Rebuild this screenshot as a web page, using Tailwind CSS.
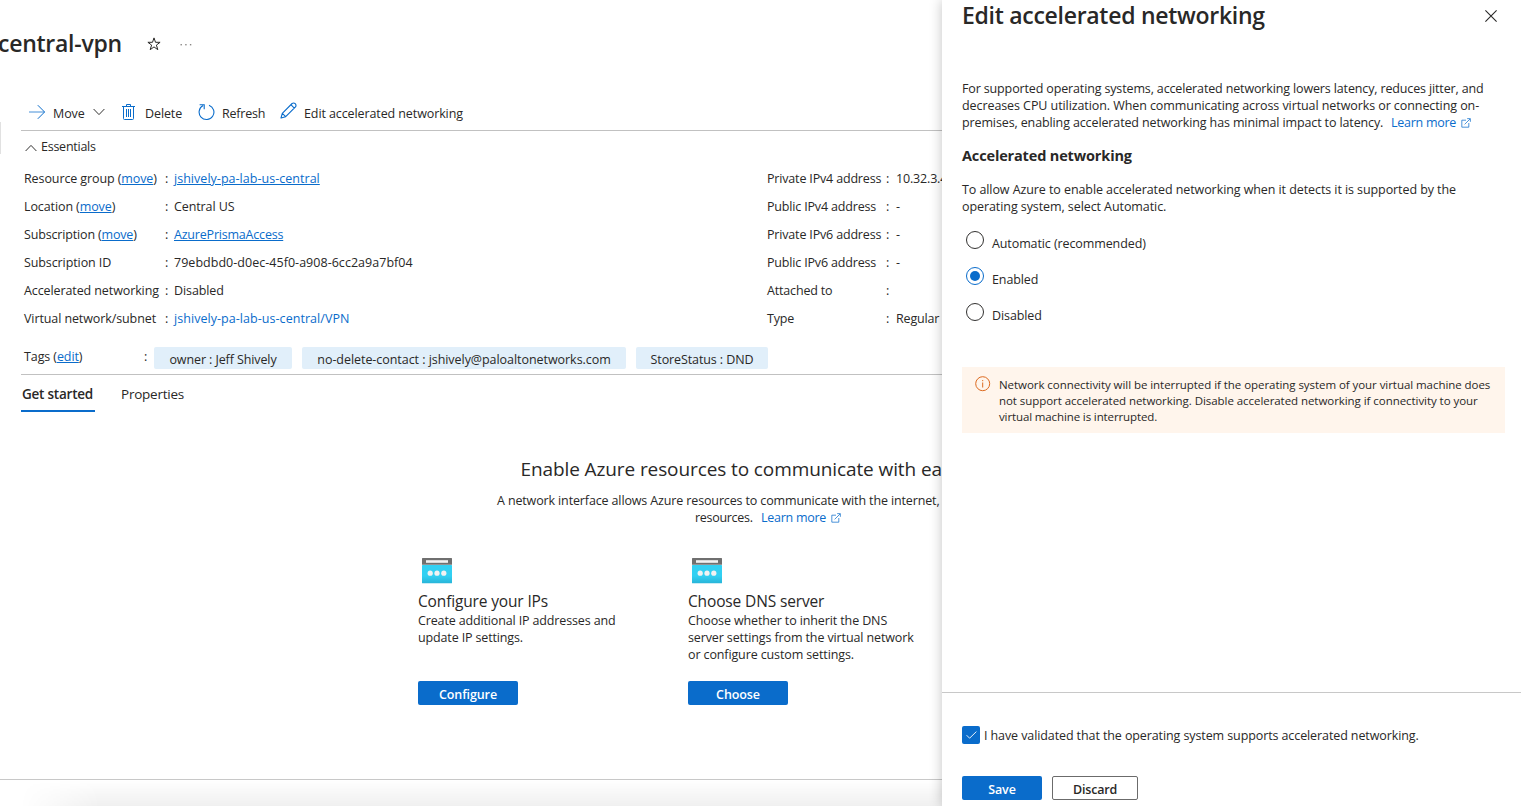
<!DOCTYPE html>
<html lang="en">
<head>
<meta charset="utf-8">
<title>Edit accelerated networking</title>
<script src="https://cdn.jsdelivr.net/npm/@tailwindcss/browser@4"></script>
</head>
<body class="bg-white">
<div class="flex h-[806px] w-[1521px] overflow-hidden bg-white font-['Open_Sans','Noto_Sans',sans-serif] text-[12.5px] leading-[17px] tracking-[-0.1px] whitespace-nowrap text-[#292827]">

  <main class="relative flex h-full w-[942px] shrink-0 flex-col overflow-hidden">
    <!-- Resource title -->
    <header class="flex h-[88px] items-center">
      <h1 class="-mt-[2px] -ml-[2px] w-[149px] text-[23px] leading-8 font-semibold tracking-[-0.26px]">central-vpn</h1>
      <svg class="size-[14px]" viewBox="0 0 14 14" fill="none" stroke="#292827" stroke-width="1"><path d="M7 .9 8.5 5.3H13.1L9.4 8.1 10.8 12.7 7 9.9 3.2 12.7 4.6 8.1.9 5.3H5.5Z"/></svg>
      <svg class="ml-[19px] h-[3px] w-[12px]" viewBox="0 0 12 3" fill="#8a8886"><rect x="0.5" y="1" width="1.4" height="1.4"/><rect x="5.2" y="1" width="1.4" height="1.4"/><rect x="9.9" y="1" width="1.4" height="1.4"/></svg>
    </header>

    <!-- Command bar -->
    <nav class="ml-[21px] flex h-[43px] border-b border-[#c1c1c1] pt-[9px]">
      <div class="flex h-[32px] w-[99px] items-center pl-[7px]">
        <svg class="mt-[-2px] h-[16px] w-[18px]" viewBox="0 0 18 16" fill="none" stroke="#0a6ccb"><path d="M1 8H16.5" stroke-opacity=".75"/><path d="M9.8 1.2 16.6 8 9.8 14.8"/></svg>
        <span class="ml-[7px] w-[32px]">Move</span>
        <svg class="mt-[-3px] ml-[8px] h-[8px] w-[12px]" viewBox="0 0 12 8" fill="none" stroke="#323130"><path d="M.6 1 6 6.6 11.4 1"/></svg>
      </div>
      <div class="flex h-[32px] w-[76px] items-center">
        <svg class="mt-[-2px] ml-[1px] h-[18px] w-[15px]" viewBox="0 0 15 18" fill="none" stroke="#0a6ccb"><path d="M1 3.5H14M5.5 3V1.5H9.5V3M2.5 3.5V15.5Q2.5 16.5 3.5 16.5H11.5Q12.5 16.5 12.5 15.5V3.5"/><path d="M5.5 6V14M7.5 6V14M9.5 6V14"/></svg>
        <span class="ml-[9px]">Delete</span>
      </div>
      <div class="flex h-[32px] w-[84px] items-center">
        <svg class="mt-[-3px] ml-[1.5px] h-[18px] w-[17px]" viewBox="0 0 17 18" fill="none" stroke="#0a6ccb" stroke-width="1.1"><path d="M11 2.2A7.4 7.4 0 1 1 5.1 2.6"/><path d="M1.6 1.7H6.2V6.3"/></svg>
        <span class="ml-[7.5px] tracking-[-0.2px]">Refresh</span>
      </div>
      <div class="flex h-[32px] items-center">
        <svg class="mt-[-5px] h-[17px] w-[17px]" viewBox="0 0 17 17" fill="none" stroke="#0a6ccb" stroke-width="1.1" stroke-linejoin="round"><path d="M1 16 2.3 11.3 12.1 1.5Q13.8.3 15.2 1.7T15.5 4.9L5.7 14.7ZM10.9 2.7 14.3 6.1M2.3 11.3 5.7 14.7"/></svg>
        <span class="ml-[7px]">Edit accelerated networking</span>
      </div>
    </nav>

    <!-- Essentials -->
    <div class="flex h-[32px] items-center pl-[25px]">
      <svg class="mt-[1px] h-[8px] w-[12px]" viewBox="0 0 12 8" fill="none" stroke="#323130"><path d="M.6 7 6 1.4 11.4 7"/></svg>
      <span class="-mt-[1px] ml-[4px] tracking-[-0.25px]">Essentials</span>
    </div>
    <div class="mt-[2px] -mb-px flex pl-6 leading-7">
      <dl class="grid w-[743px] shrink-0 grid-cols-[141px_9px_1fr]">
        <dt>Resource group (<a class="text-[#0a6ccb] underline">move</a>)</dt><dd>:</dd><dd><a class="text-[#0a6ccb] underline tracking-[0.03px]">jshively-pa-lab-us-central</a></dd>
        <dt>Location (<a class="text-[#0a6ccb] underline">move</a>)</dt><dd>:</dd><dd>Central US</dd>
        <dt class="tracking-[-0.16px]">Subscription (<a class="text-[#0a6ccb] underline">move</a>)</dt><dd>:</dd><dd><a class="text-[#0a6ccb] underline tracking-[-0.2px]">AzurePrismaAccess</a></dd>
        <dt>Subscription ID</dt><dd>:</dd><dd class="tracking-[0.03px]">79ebdbd0-d0ec-45f0-a908-6cc2a9a7bf04</dd>
        <dt>Accelerated networking</dt><dd>:</dd><dd>Disabled</dd>
        <dt>Virtual network/subnet</dt><dd>:</dd><dd><a class="text-[#0a6ccb] tracking-[0.05px]">jshively-pa-lab-us-central/VPN</a></dd>
      </dl>
      <dl class="grid w-[260px] shrink-0 grid-cols-[119px_10px_1fr] tracking-[-0.17px]">
        <dt>Private IPv4 address</dt><dd>:</dd><dd>10.32.3.4</dd>
        <dt>Public IPv4 address</dt><dd>:</dd><dd>-</dd>
        <dt>Private IPv6 address</dt><dd>:</dd><dd>-</dd>
        <dt>Public IPv6 address</dt><dd>:</dd><dd>-</dd>
        <dt>Attached to</dt><dd>:</dd><dd></dd>
        <dt>Type</dt><dd>:</dd><dd>Regular</dd>
      </dl>
    </div>

    <!-- Tags -->
    <div class="ml-[21px] flex h-[43px] border-b border-[#c1c1c1] pt-[15px] pl-[3px]">
      <span class="mt-[1px] w-[120px]">Tags (<a class="text-[#0a6ccb] underline">edit</a>)</span>
      <span class="mt-[1px] w-[10px]">:</span>
      <div class="flex gap-[10px]">
        <span class="h-[22px] w-[138px] rounded-xs bg-[#e1effa] text-center leading-[26px]">owner : Jeff Shively</span>
        <span class="h-[22px] w-[324px] rounded-xs bg-[#e1effa] text-center leading-[26px] tracking-[-0.05px]">no-delete-contact : jshively@paloaltonetworks.com</span>
        <span class="h-[22px] w-[132px] rounded-xs bg-[#e1effa] text-center leading-[26px]">StoreStatus : DND</span>
      </div>
    </div>

    <!-- Tabs -->
    <div class="flex h-[37px] gap-[26px] pl-[21px] text-[13.5px] leading-[38px] tracking-[-0.23px]">
      <span class="w-[74px] border-b-2 border-[#0a6ccb] pl-[1px] font-semibold">Get started</span>
      <span>Properties</span>
    </div>

    <!-- Get started content -->
    <h2 class="mt-[43px] pl-[520.5px] text-[19px] leading-[28px] tracking-[-0.1px]">Enable Azure resources to communicate with ease</h2>
    <p class="mt-[9px] pl-[497px] tracking-[-0.134px]">A network interface allows Azure resources to communicate with the internet, other</p>
    <p class="flex items-center pl-[695px]"><span class="w-[66px] tracking-[-0.3px]">resources.</span><a class="w-[65px] tracking-[-0.27px] text-[#0a6ccb]">Learn more</a>
      <svg class="ml-[5px] size-[10px]" viewBox="0 0 11 11" fill="none" stroke="#0a6ccb" stroke-width=".8"><path d="M5.5 2.4H.9V10.1H8.6V5.5M4 7 10 1M6.8.7H10.3V4.2"/></svg></p>

    <div class="mt-[31px] flex gap-[44px] pl-[418px]">
      <section class="w-[226px] shrink-0">
        <svg class="mt-px ml-[4px] h-[27px] w-[30px]" viewBox="0 0 30 27"><defs><linearGradient id="g" x2="0" y2="1"><stop offset=".6" stop-color="#32d0f2"/><stop offset="1" stop-color="#28b4d8"/></linearGradient></defs><rect y="7" width="30" height="18.3" rx=".5" fill="url(#g)"/><path d="M0 .5Q0 0 .5 0H29.5Q30 0 30 .5V6.7H0Z" fill="#6f6f6f"/><rect x="4" y="2.2" width="22" height="2.6" fill="#f2f2f2"/><g fill="#f2f2f2"><circle cx="8.2" cy="15.2" r="2.6"/><circle cx="15" cy="15.2" r="2.6"/><circle cx="21.8" cy="15.2" r="2.6"/></g></svg>
        <h3 class="mt-[6px] text-[15.5px] leading-[21px] tracking-[-0.15px]">Configure your IPs</h3>
        <p class="h-[69px] tracking-[-0.14px]">Create additional IP addresses and<br>update IP settings.</p>
        <button class="block h-[24px] w-[100px] rounded-xs bg-[#0a6ccb] pt-[2px] text-center font-semibold text-white">Configure</button>
      </section>
      <section class="w-[226px] shrink-0">
        <svg class="mt-px ml-[4px] h-[27px] w-[30px]" viewBox="0 0 30 27"><rect y="7" width="30" height="18.3" rx=".5" fill="url(#g)"/><path d="M0 .5Q0 0 .5 0H29.5Q30 0 30 .5V6.7H0Z" fill="#6f6f6f"/><rect x="4" y="2.2" width="22" height="2.6" fill="#f2f2f2"/><g fill="#f2f2f2"><circle cx="8.2" cy="15.2" r="2.6"/><circle cx="15" cy="15.2" r="2.6"/><circle cx="21.8" cy="15.2" r="2.6"/></g></svg>
        <h3 class="mt-[6px] text-[15.5px] leading-[21px] tracking-[-0.14px]">Choose DNS server</h3>
        <p class="h-[69px] tracking-[-0.12px]">Choose whether to inherit the DNS<br>server settings from the virtual network<br>or configure custom settings.</p>
        <button class="block h-[24px] w-[100px] rounded-xs bg-[#0a6ccb] pt-[2px] text-center font-semibold text-white">Choose</button>
      </section>
    </div>

    <div class="mt-auto h-[27px] border-t border-[#c8c8c8] pl-[20px]">
      <div class="h-full bg-linear-to-b from-black/0 to-black/6 [mask-image:linear-gradient(to_right,transparent,black_80px)]"></div>
    </div>
    <!-- Edge of the view to the left -->
    <div class="absolute top-[122px] left-0 h-[32px] w-px bg-[#e1e1e1]"></div>
  </main>

  <!-- Side panel -->
  <aside class="relative flex h-full w-[579px] shrink-0 flex-col bg-white shadow-[0_0_12px_rgba(0,0,0,0.24)]">
    <header class="flex h-[80px] items-start pl-[20px]">
      <h2 class="w-[523px] text-[23px] leading-[31px] font-semibold tracking-[-0.28px]">Edit accelerated networking</h2>
      <svg class="mt-[10px] size-[12px]" viewBox="0 0 12 12" fill="none" stroke="#292827" stroke-width="1.1"><path d="M.4.4 11.6 11.6M11.6.4.4 11.6"/></svg>
    </header>
    <div class="pl-[20px]">
      <p class="tracking-[-0.14px]">For supported operating systems, accelerated networking lowers latency, reduces jitter, and<br><span class="tracking-[-0.08px]">decreases CPU utilization. When communicating across virtual networks or connecting on-</span></p>
      <p class="flex items-center tracking-[-0.12px]"><span class="w-[429px]">premises, enabling accelerated networking has minimal impact to latency.</span><a class="w-[65px] tracking-[-0.27px] text-[#0a6ccb]">Learn more</a>
        <svg class="ml-[5px] size-[10px]" viewBox="0 0 11 11" fill="none" stroke="#0a6ccb" stroke-width=".8"><path d="M5.5 2.4H.9V10.1H8.6V5.5M4 7 10 1M6.8.7H10.3V4.2"/></svg></p>
      <h3 class="mt-[15px] text-[14.5px] leading-[20px] font-bold tracking-[-0.15px]">Accelerated networking</h3>
      <p class="mt-[15px] tracking-[-0.08px]">To allow Azure to enable accelerated networking when it detects it is supported by the<br>operating system, select Automatic.</p>
      <div class="mt-[16px] ml-[4px] flex flex-col gap-[18px]">
        <label class="flex h-[18px]"><span class="size-[18px] rounded-full border border-[#323130]"></span><span class="mt-[4px] ml-[8px]">Automatic (recommended)</span></label>
        <label class="flex h-[18px]"><span class="flex size-[18px] items-center justify-center rounded-full border border-[#0a6ccb]"><span class="size-[10px] rounded-full bg-[#0a6ccb]"></span></span><span class="mt-[4px] ml-[8px]">Enabled</span></label>
        <label class="flex h-[18px]"><span class="size-[18px] rounded-full border border-[#323130]"></span><span class="mt-[4px] ml-[8px]">Disabled</span></label>
      </div>
      <div class="mt-[46px] flex h-[66px] w-[543px] bg-[#fff5ec] pl-[13px]">
        <svg class="mt-[9px] size-[16px]" viewBox="0 0 16 16" fill="none" stroke="#dd6a1f"><circle cx="7.7" cy="7.7" r="7"/><path d="M7.7 6.5V11.5M7.7 4V5.2"/></svg>
        <p class="mt-[9.5px] ml-[8px] text-[11.5px] leading-[16px] tracking-[-0.055px]">Network connectivity will be interrupted if the operating system of your virtual machine does<br>not support accelerated networking. Disable accelerated networking if connectivity to your<br><span class="tracking-[-0.12px]">virtual machine is interrupted.</span></p>
      </div>
    </div>
    <footer class="mt-auto h-[114px] border-t border-[#c8c8c8] pt-[33px] pl-[20px]">
      <label class="flex h-[18px] items-center"><span class="flex size-[18px] items-center justify-center rounded-xs bg-[#0a6ccb]"><svg class="mt-[-1px] h-[8px] w-[11px]" viewBox="0 0 11 8" fill="none" stroke="#fff" stroke-width=".9"><path d="M.6 4.2 3.6 7.2 10.4.6"/></svg></span><span class="mt-px ml-[4px]">I have validated that the operating system supports accelerated networking.</span></label>
      <div class="mt-[32px] flex gap-[10px] text-center font-semibold">
        <button class="h-[24px] w-[80px] rounded-xs bg-[#0a6ccb] pt-[2px] text-white">Save</button>
        <button class="h-[24px] w-[86px] rounded-xs border border-[#6b6b6b] pt-[2px] tracking-[-0.2px]">Discard</button>
      </div>
    </footer>
  </aside>
</div>
</body>
</html>
